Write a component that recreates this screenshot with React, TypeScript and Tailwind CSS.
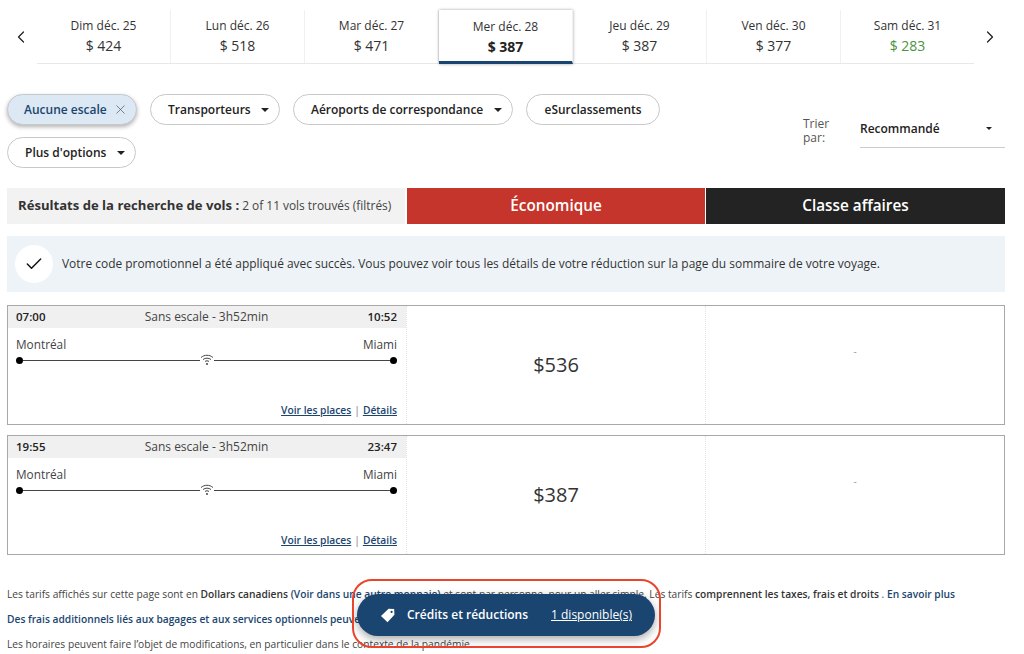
import React from 'react';
import { ChevronLeft, ChevronRight, X, Check } from 'lucide-react';

const days = [
  { label: 'Dim déc. 25', price: '$ 424' },
  { label: 'Lun déc. 26', price: '$ 518' },
  { label: 'Mar déc. 27', price: '$ 471' },
  { label: 'Mer déc. 28', price: '$ 387', active: true },
  { label: 'Jeu déc. 29', price: '$ 387' },
  { label: 'Ven déc. 30', price: '$ 377' },
  { label: 'Sam déc. 31', price: '$ 283', low: true },
];

const flights = [
  { dep: '07:00', arr: '10:52', price: '$536' },
  { dep: '19:55', arr: '23:47', price: '$387' },
];

const Caret = () => (
  <svg width="8" height="4" viewBox="0 0 8 4" className="shrink-0">
    <path d="M0 0h8L4 4z" fill="#222" />
  </svg>
);

const Wifi = () => (
  <svg width="14" height="12" viewBox="0 0 14 12" fill="none" stroke="#444" strokeWidth="1" className="shrink-0">
    <path d="M1 3.500C4.500 .5 9.500 .5 13 3.500" />
    <path d="M3 5.500C5.300 3.700 8.700 3.700 11 5.500" />
    <path d="M5 7.500C6.200 6.600 7.800 6.600 9 7.500" />
    <circle cx="7" cy="10" r="1" fill="#444" stroke="none" />
  </svg>
);

const Pill = ({ label, width }: { label: string; width: string }) => (
  <button className={`h-[31px] ${width} flex items-center justify-between pl-[17px] pr-[10px] rounded-full border border-[#c8c8c8] bg-white text-[12px] font-semibold text-[#222]`}>
    <span>{label}</span>
    <Caret />
  </button>
);

export default function App() {
  return (
    <div className="relative h-[654px] w-[1024px] overflow-hidden bg-white pl-[7px] pr-[19px] pt-[10px] font-['Open_Sans',sans-serif] text-[#333]">
      {/* date strip */}
      <div className="flex h-[54px] items-start">
        <div className="flex h-[54px] w-[30px] items-center pb-[1px] pl-[4px]">
          <ChevronLeft size={20} strokeWidth={1.5} color="#222" />
        </div>
        <div className="flex h-[54px] w-[937px] border-b border-[#e8e8e8]">
          {days.map((d) => (
            <div
              key={d.label}
              className={`flex flex-1 flex-col items-center border-r border-[#f0f0f0] pt-[6px] text-[12px] leading-[20px] last:border-r-0 ${
                d.active ? 'h-[54px] border-b-[3px] border-b-[#1a4570] pt-[7px] shadow-[0_0_3px_rgba(0,0,0,0.35)]' : ''
              }`}
            >
              <span className="text-[#333]">{d.label}</span>
              <span className={`text-[14px] ${d.active ? 'font-bold text-[#222]' : d.low ? 'text-[#4b9440]' : 'text-[#333]'}`}>{d.price}</span>
            </div>
          ))}
        </div>
        <div className="flex h-[54px] w-[26px] items-center justify-end pb-[1px]">
          <ChevronRight size={20} strokeWidth={1.5} color="#222" />
        </div>
      </div>

      {/* filters and sort */}
      <div className="mt-[30px] flex h-[94px] justify-between">
        <div className="flex w-[680px] flex-wrap content-start gap-x-[13px] gap-y-[12px]">
          <button className="flex h-[31px] w-[130px] items-center justify-between rounded-full border border-[#c8c8c8] bg-[#dce8f3] pl-[16px] pr-[8px] text-[12px] font-semibold text-[#1a4570] shadow-[0_2px_4px_rgba(0,0,0,0.3)]">
            <span>Aucune escale</span>
            <X size={15} strokeWidth={1} color="#444" />
          </button>
          <Pill label="Transporteurs" width="w-[130px]" />
          <Pill label="Aéroports de correspondance" width="w-[220px]" />
          <button className="h-[31px] w-[134px] rounded-full border border-[#c8c8c8] bg-white text-[11.900px] font-semibold text-[#222]">eSurclassements</button>
          <Pill label="Plus d'options" width="w-[129px]" />
        </div>
        <div className="mt-[22px] flex h-[32px] items-start">
          <span className="mt-[1px] w-[40px] text-[12px] leading-[14px] text-[#555]">Trier par:</span>
          <div className="ml-[17px] flex h-[32px] w-[145px] items-start justify-between border-b border-[#ccc] pr-[13px] pt-[4px] text-[12px] font-semibold text-[#222]">
            <span>Recommandé</span>
            <svg width="6" height="3" viewBox="0 0 6 3" className="mt-[7px]"><path d="M0 0h6L3 3z" fill="#222" /></svg>
          </div>
        </div>
      </div>

      {/* results header */}
      <div className="flex h-[36px]">
        <div className="flex w-[398px] items-center bg-[#f2f2f2] pl-[11px] text-[11.900px] text-[#444]">
          <span className="mr-[3px] text-[13.100px] font-bold text-[#333]">Résultats de la recherche de vols :</span> 2 of 11 vols trouvés (filtrés)
        </div>
        <div className="ml-[2px] flex w-[298px] items-center justify-center bg-[#c5352b] pb-[2px] text-[15.300px] font-semibold text-white">Économique</div>
        <div className="ml-[1px] flex w-[299px] items-center justify-center bg-[#232323] pb-[2px] text-[15.300px] font-semibold text-white">Classe affaires</div>
      </div>

      {/* promo banner */}
      <div className="mt-[12px] flex h-[56px] items-center gap-[9px] bg-[#eef3f8] pl-[8px] text-[11.950px] text-[#333]">
        <div className="flex h-[38px] w-[38px] items-center justify-center rounded-full bg-white">
          <Check size={20} strokeWidth={1.75} color="#111" />
        </div>
        <span>Votre code promotionnel a été appliqué avec succès. Vous pouvez voir tous les détails de votre réduction sur la page du sommaire de votre voyage.</span>
      </div>

      {/* flights */}
      <div className="mt-[13px] flex flex-col gap-[10px]">
        {flights.map((f) => (
          <div key={f.dep} className="flex h-[120px] border border-[#a8a8a8]">
            <div className="flex w-[399px] flex-col border-r border-dotted border-[#e4e4e4]">
              <div className="flex h-[22px] items-center justify-between bg-[#f0f0f0] pb-[1px] pl-[8px] pr-[9px] text-[12px]">
                <span className="text-[11.500px] font-semibold text-[#222]">{f.dep}</span>
                <span className="text-[#444]">Sans escale - 3h52min</span>
                <span className="text-[11.500px] font-semibold text-[#222]">{f.arr}</span>
              </div>
              <div className="flex flex-1 flex-col pb-[6px] pl-[8px] pr-[9px]">
                <div className="mt-[8px] flex justify-between text-[11.800px] leading-[16px] text-[#444]">
                  <span>Montréal</span>
                  <span>Miami</span>
                </div>
                <div className="mt-[2px] flex items-center">
                  <span className="h-[7px] w-[7px] rounded-full bg-black" />
                  <span className="h-px flex-1 bg-[#444]" />
                  <Wifi />
                  <span className="h-px flex-1 bg-[#444]" />
                  <span className="h-[7px] w-[7px] rounded-full bg-black" />
                </div>
                <div className="mt-auto flex justify-end gap-[3px] text-[10.250px] font-semibold text-[#999]">
                  <span className="text-[#1a4570] underline">Voir les places</span>|<span className="text-[#1a4570] underline">Détails</span>
                </div>
              </div>
            </div>
            <div className="flex w-[299px] items-center justify-center border-r border-dotted border-[#e4e4e4] text-[20px] text-[#333]">{f.price}</div>
            <div className="flex flex-1 justify-center pt-[38px] text-[10px] text-[#999]">-</div>
          </div>
        ))}
      </div>

      {/* fine print */}
      <div className="mt-[32px] flex flex-col gap-[10px] whitespace-nowrap text-[10.220px] leading-[15px] text-[#444]">
        <p>
          Les tarifs affichés sur cette page sont en <b className="font-semibold text-[#333]">Dollars canadiens</b> <span className="font-semibold text-[#1a4570]">(Voir dans une autre monnaie)</span> et sont par personne, pour un aller simple. Les tarifs <b className="font-semibold text-[#333]">comprennent les taxes, frais et droits</b> . <span className="font-semibold text-[#1a4570]">En savoir plus</span>
        </p>
        <p className="font-semibold text-[#1a4570]">Des frais additionnels liés aux bagages et aux services optionnels peuvent s'appliquer.</p>
        <p>Les horaires peuvent faire l’objet de modifications, en particulier dans le contexte de la pandémie</p>
      </div>

      {/* floating credits bar, circled in the screenshot */}
      <div className="absolute left-[357px] top-[594px] flex h-[42px] w-[298px] items-center rounded-full bg-[#1a4570] pl-[23px] text-[12px] text-white shadow-[0_3px_8px_rgba(0,0,0,0.35)]">
        <svg width="15" height="15" viewBox="0 0 14 14" className="mr-[12px] shrink-0">
          <path fillRule="evenodd" fill="#fff" d="M8 .8 13.200 1l.3 5.200L7 13.200.9 7.500zM10.800 2.600a1 1 0 1 0 .01 0z" />
        </svg>
        <span className="font-semibold">Crédits et réductions</span>
        <span className="ml-[23px] underline">1 disponible(s)</span>
      </div>
      <div className="absolute left-[352px] top-[579px] h-[69px] w-[309px] rounded-[20px] border-[2px] border-[#e8452c]" />
    </div>
  );
}
